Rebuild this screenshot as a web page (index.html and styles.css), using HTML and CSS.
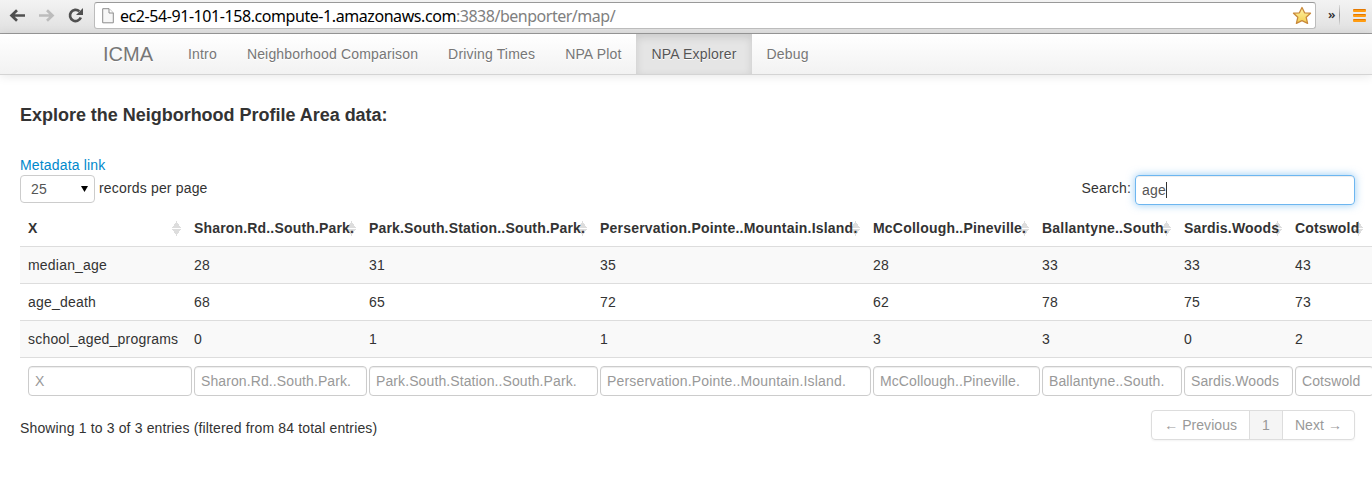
FILE: index.html
```html
<!DOCTYPE html>
<html lang="en">
<head>
<meta charset="utf-8">
<title>ICMA</title>
<link rel="stylesheet" href="styles.css">
</head>
<body>
<header class="browser">
  <svg class="browser-nav" width="94" height="33" viewBox="0 0 94 33" fill="none">
    <path d="M25 15.5H12M17 10.2L11.5 15.5L17 20.8" stroke="#505050" stroke-width="2.7"/>
    <path d="M39 15.5H52M47 10.2L52.5 15.5L47 20.8" stroke="#bcbcbc" stroke-width="2.7"/>
    <path d="M79.3 11.2A5.6 5.6 0 1 0 80.8 17.5" stroke="#505050" stroke-width="2.7"/>
    <path d="M83 8V15H76Z" fill="#505050"/>
  </svg>
  <div class="address">
    <svg class="page-icon" width="12" height="16" viewBox="0 0 12 16"><path d="M.7 .7H7L11.3 5V14.8H.7Z" fill="#f7f7f7" stroke="#8c8c8c"/><path d="M7 .7V5H11.3" fill="#fff" stroke="#8c8c8c"/></svg>
    <span class="url"><span class="host">ec2-54-91-101-158.compute-1.amazonaws.com</span><span class="path">:3838/benporter/map/</span></span>
    <svg class="star" width="20" height="19" viewBox="0 0 20 19"><defs><linearGradient id="gold" x2="0" y2="1"><stop stop-color="#fff3a8"/><stop offset="1" stop-color="#f3cf4e"/></linearGradient></defs><path d="M10 1.5L12.6 6.8L18.5 7.2L14.2 11.3L15.6 17.4L10 14.6L4.4 17.4L5.8 11.3L1.5 7.2L7.4 6.8Z" fill="url(#gold)" stroke="#c98a3c" stroke-width="1.3" stroke-linejoin="round"/></svg>
  </div>
  <span class="overflow">»</span>
  <span class="divider"></span>
  <span class="menu"><i></i><i></i><i></i></span>
</header>
<nav class="navbar">
  <a class="brand">ICMA</a>
  <a class="tab">Intro</a>
  <a class="tab">Neighborhood Comparison</a>
  <a class="tab">Driving Times</a>
  <a class="tab">NPA Plot</a>
  <a class="tab active">NPA Explorer</a>
  <a class="tab">Debug</a>
</nav>
<main class="content">
  <h4 class="title">Explore the Neigborhood Profile Area data:</h4>
  <a class="metadata">Metadata link</a>
  <div class="controls">
    <div class="length"><span class="select">25<svg width="7" height="6" viewBox="0 0 7 6"><path d="M0 0H7L3.5 6Z"/></svg></span>records per page</div>
    <div class="search">Search:<span class="search-box">age<i class="caret"></i></span></div>
  </div>
  <table class="data">
    <colgroup><col class="c1"><col class="c2"><col class="c3"><col class="c4"><col class="c5"><col class="c6"><col class="c7"><col class="c8"><col class="c9"></colgroup>
    <thead><tr><th>X</th><th>Sharon.Rd..South.Park.</th><th>Park.South.Station..South.Park.</th><th class="wide">Perservation.Pointe..Mountain.Island.</th><th class="wide">McCollough..Pineville.</th><th class="wide">Ballantyne..South.</th><th>Sardis.Woods</th><th>Cotswold</th><td></td></tr></thead>
    <tbody>
      <tr><td>median_age</td><td>28</td><td>31</td><td>35</td><td>28</td><td>33</td><td>33</td><td>43</td><td></td></tr>
      <tr><td>age_death</td><td>68</td><td>65</td><td>72</td><td>62</td><td>78</td><td>75</td><td>73</td><td></td></tr>
      <tr><td>school_aged_programs</td><td>0</td><td>1</td><td>1</td><td>3</td><td>3</td><td>0</td><td>2</td><td></td></tr>
    </tbody>
    <tfoot><tr>
      <td><input placeholder="X"></td><td><input placeholder="Sharon.Rd..South.Park."></td><td><input placeholder="Park.South.Station..South.Park."></td><td><input class="long" placeholder="Perservation.Pointe..Mountain.Island."></td><td><input placeholder="McCollough..Pineville."></td><td><input placeholder="Ballantyne..South."></td><td><input placeholder="Sardis.Woods"></td><td><input placeholder="Cotswold"></td><td></td>
    </tr></tfoot>
  </table>
  <div class="summary">
    <div class="info">Showing 1 to 3 of 3 entries (filtered from 84 total entries)</div>
    <div class="pagination"><a>← Previous</a><a class="current">1</a><a>Next →</a></div>
  </div>
</main>
</body>
</html>
```
FILE: styles.css
```css
body {
  margin: 0;
  height: 482px;
  overflow: hidden;
  background: #fff;
  color: #333;
  font: 14px/20px "Liberation Sans", Arial, sans-serif;
  letter-spacing: .17px;
}
.browser {
  display: flex;
  box-sizing: border-box;
  height: 34px;
  background: linear-gradient(#f3f3f3, #e0e0e0);
  border-bottom: 1px solid #999;
}
.browser-nav { flex: none; }
.address {
  display: flex;
  align-items: center;
  box-sizing: border-box;
  width: 1222px;
  height: 27px;
  margin-top: 2px;
  padding: 0 3px 0 7px;
  background: #fff;
  border: 1px solid #bcbcbc;
  border-top-color: #999;
  border-radius: 3px;
}
.url {
  flex: 1;
  margin-left: 6px;
  font: 16px/24px "Noto Sans", sans-serif;
  letter-spacing: -.43px;
  white-space: nowrap;
}
.host { color: #000; }
.path { color: #808080; letter-spacing: -.48px; }
.overflow {
  width: 8px;
  margin: 5px 3px 0 12px;
  color: #333;
  font: 600 13px/18px "Noto Sans", sans-serif;
}
.divider {
  width: 1px;
  height: 20px;
  margin-top: 5px;
  background: linear-gradient(#ddd, #999, #ddd);
}
.menu {
  display: flex;
  flex-direction: column;
  gap: 2px;
  margin: 9px 0 0 13px;
}
.menu i {
  width: 13px;
  height: 3px;
  background: linear-gradient(#e47900 33%, #ff9c12 34%);
  border-radius: 1px;
}
.navbar {
  display: flex;
  height: 40px;
  padding-left: 83px;
  background: linear-gradient(#fff, #f2f2f2);
  border-bottom: 1px solid #d4d4d4;
  box-shadow: 0 1px 10px rgba(0, 0, 0, .1);
  color: #777;
  text-shadow: 0 1px 0 #fff;
}
.brand { padding: 10px 20px; font-size: 20px; letter-spacing: 0; }
.tab { padding: 10px 15px; }
.active {
  color: #555;
  background: #e5e5e5;
  box-shadow: inset 0 3px 8px rgba(0, 0, 0, .125);
}
.content { padding: 30px 17px 0 20px; }
.title { margin: 0 0 30px; font-size: 18px; line-height: 20px; letter-spacing: -.02px; }
.metadata { display: block; color: #08c; }
.controls {
  display: flex;
  justify-content: space-between;
  height: 35px;
}
.length, .search { display: flex; line-height: 27px; }
.length { gap: 4px; }
.search { gap: 4px; }
.select {
  display: flex;
  align-items: center;
  justify-content: space-between;
  box-sizing: border-box;
  width: 75px;
  height: 28px;
  padding: 0 6px 0 10px;
  border: 1px solid #ccc;
  border-radius: 4px;
  color: #555;
}
.select svg { margin-bottom: 1px; }
.search-box {
  display: flex;
  align-items: center;
  box-sizing: border-box;
  width: 220px;
  height: 30px;
  padding: 0 6px;
  border: 1px solid #6db6f0;
  border-radius: 4px;
  box-shadow: inset 0 1px 1px rgba(0, 0, 0, .075), 0 0 8px rgba(82, 168, 236, .6);
  color: #555;
}
.caret { width: 1px; height: 16px; background: #333; }
.data {
  width: 1392px;
  table-layout: fixed;
  border-collapse: separate;
  border-spacing: 0;
}
.c1 { width: 166px; }
.c2 { width: 175px; }
.c3 { width: 231px; }
.c4 { width: 273px; }
.c5 { width: 169px; }
.c6 { width: 142px; }
.c7 { width: 111px; }
.c8 { width: 81px; }
.c9 { width: 44px; }
.data th, .data td {
  padding: 8px;
  text-align: left;
  white-space: nowrap;
}
/* Paired up and down sort markers at the right of each heading. */
.data th {
  background-image: conic-gradient(from 147deg at 50% 0, #ddd 66deg, transparent 0),
    conic-gradient(from -33deg at 50% 100%, #ddd 66deg, transparent 0);
  background-position: right 5px top 19px, right 5px top 11px;
  background-size: 9px 7px;
  background-repeat: no-repeat;
}
.data th {
  background-image: conic-gradient(from 147deg at 50% 0, #ddd 66deg, transparent 0),
    conic-gradient(from -33deg at 50% 100%, #ddd 66deg, transparent 0);
  background-position: right 5px top 11px, right 5px top 19px;
}
.data .wide { letter-spacing: .21px; }
tbody td, tfoot td { border-top: 1px solid #ddd; }
tbody td { letter-spacing: .2px; }
tbody tr:nth-child(odd) td { background: #f9f9f9; }
.data input {
  display: block;
  box-sizing: content-box;
  width: 100%;
  height: 20px;
  padding: 4px 6px;
  border: 1px solid #ccc;
  border-radius: 4px;
  background: #fff;
  box-shadow: inset 0 1px 1px rgba(0, 0, 0, .075);
  font: 14px/20px "Liberation Sans", Arial, sans-serif;
  letter-spacing: .1px;
}
.data .long { letter-spacing: .17px; }
.data input::placeholder { color: #999; opacity: 1; }
.summary {
  display: flex;
  justify-content: space-between;
  padding-top: 6px;
}
.info { padding-top: 8px; letter-spacing: .145px; }
.pagination {
  display: flex;
  border: 1px solid #ddd;
  border-radius: 4px;
  box-shadow: 0 1px 2px rgba(0, 0, 0, .05);
  color: #999;
  letter-spacing: .06px;
}
.pagination a { padding: 4px 12px; }
.pagination .current {
  background: #f5f5f5;
  border: solid #ddd;
  border-width: 0 1px;
}
```
